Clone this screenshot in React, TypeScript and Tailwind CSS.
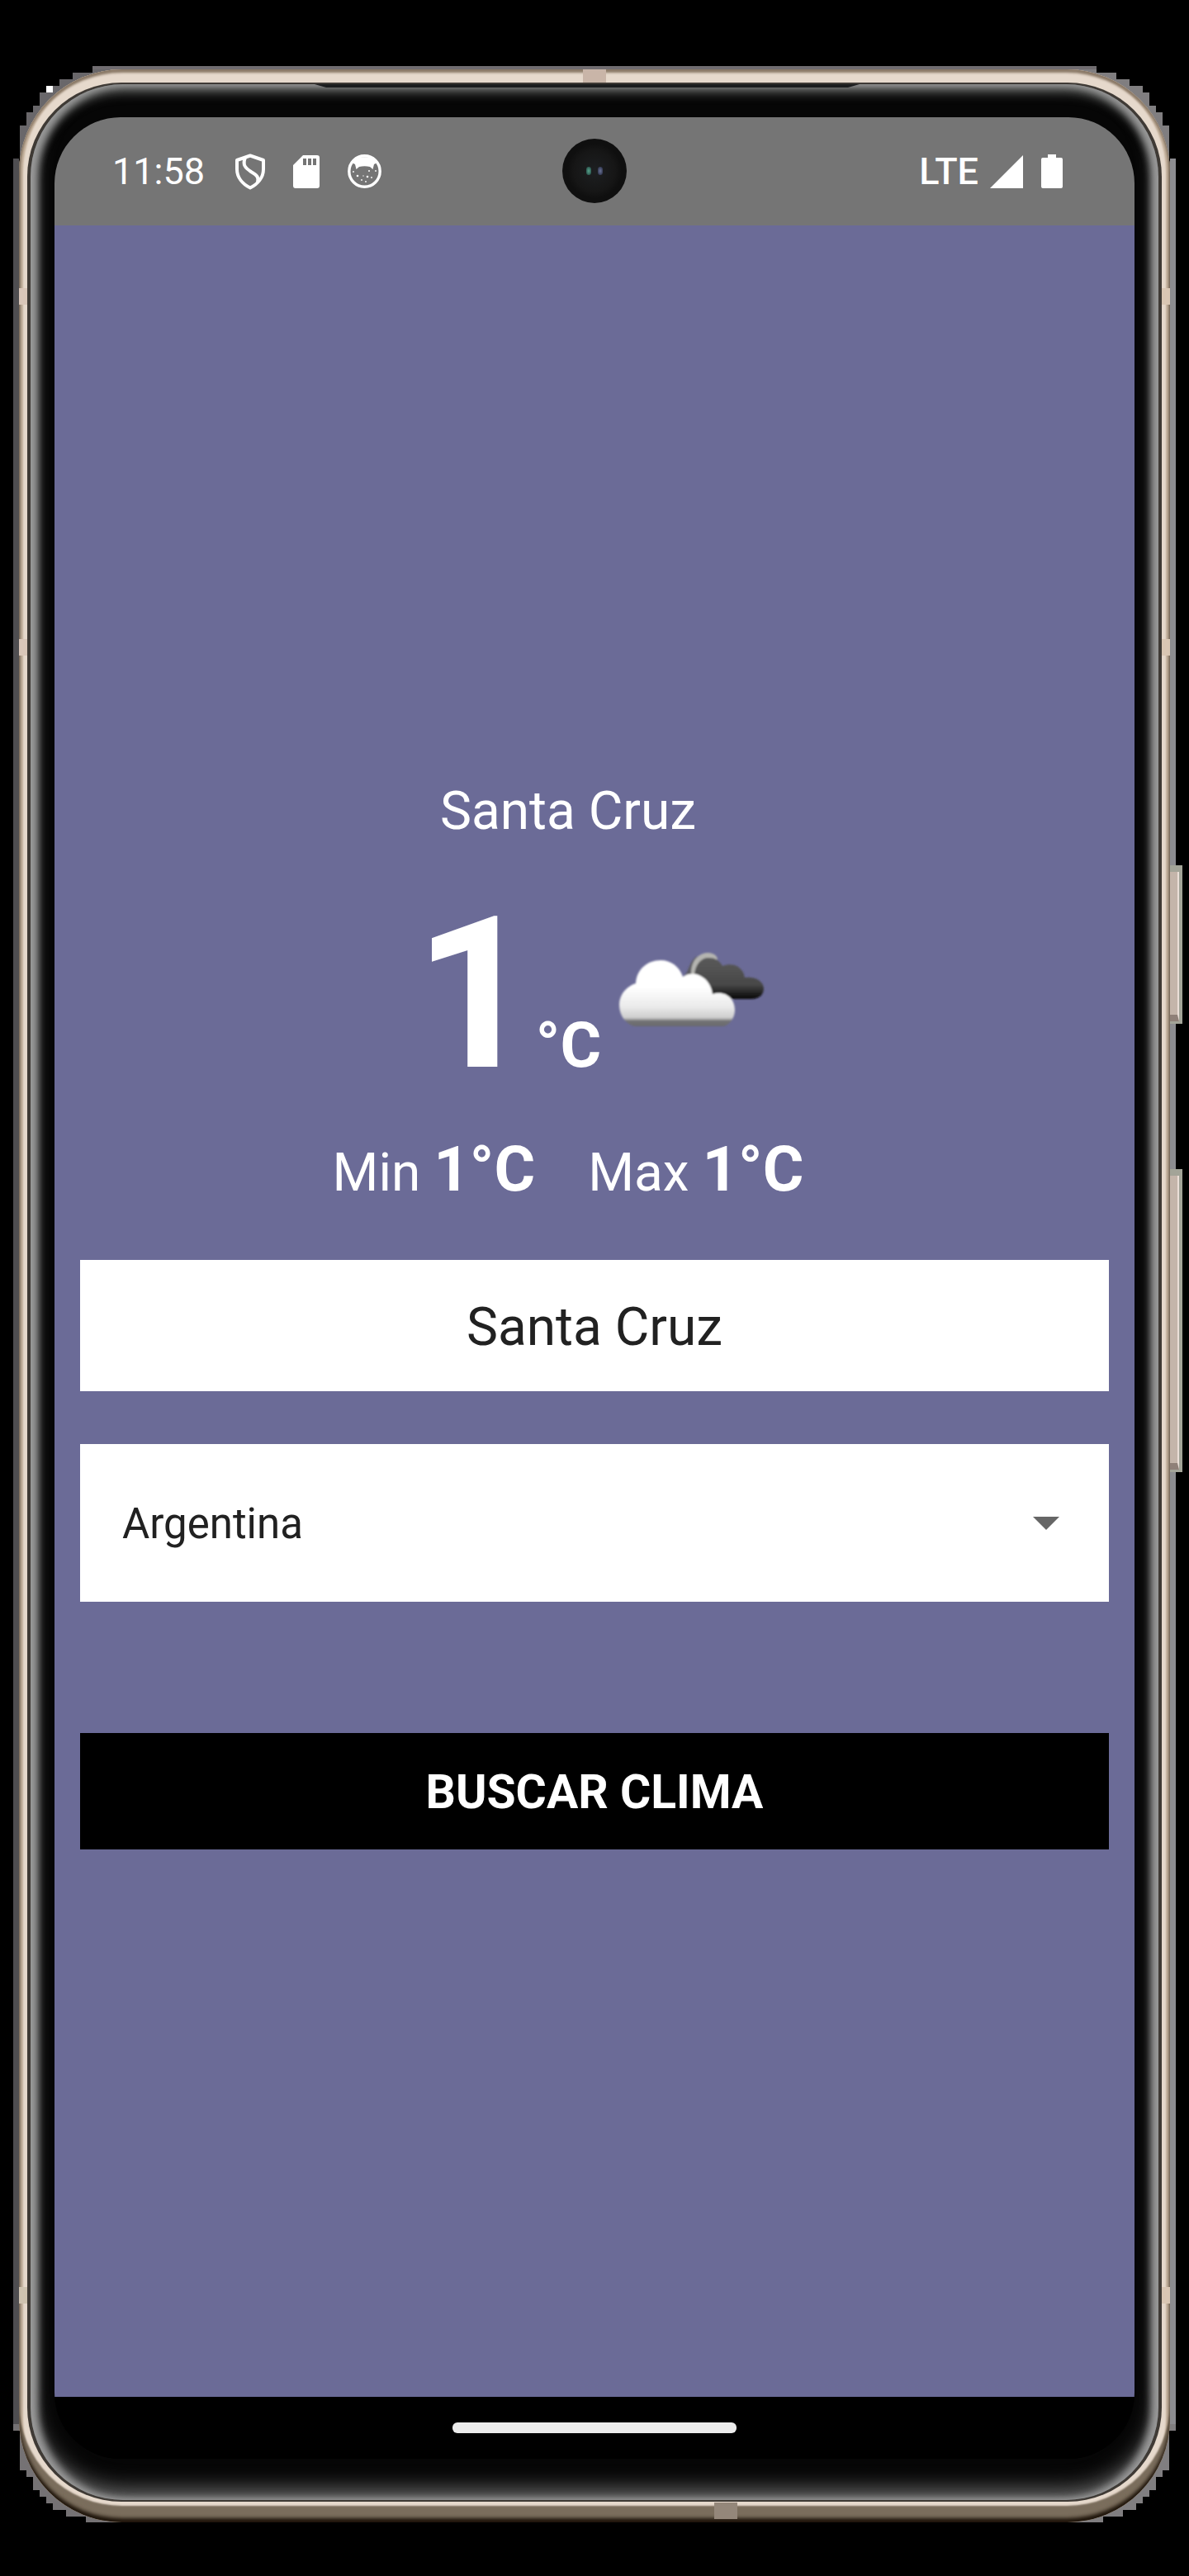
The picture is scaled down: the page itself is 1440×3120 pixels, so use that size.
import React, { useState } from "react";

function ShieldIcon() {
  return (
    <svg viewBox="0 0 36 44" className="h-11 w-9" fill="none" stroke="white" strokeWidth="4" strokeLinejoin="round" aria-hidden="true">
      <path d="M18 2.5 L34 8 V19 C34 29 27 37 18 41.5 C9 37 2 29 2 19 V8 Z" />
      <path d="M12 5 C8 14 13 18 19 22 C26 26 29 29 27 35" />
    </svg>
  );
}

function SdCardIcon() {
  return (
    <svg viewBox="0 0 32 40" className="h-10 w-8" aria-hidden="true">
      <path fill="white" fillRule="evenodd" d="M12 0 H29 Q32 0 32 3 V37 Q32 40 29 40 H3 Q0 40 0 37 V12 Z M12 4 V12 H16 V4 Z M18 4 V12 H22 V4 Z M24 4 V12 H28 V4 Z" />
    </svg>
  );
}

function CatIcon() {
  return (
    <svg viewBox="0 0 41 41" className="h-[41px] w-[41px]" aria-hidden="true">
      <circle cx="20.5" cy="20.5" r="18.7" fill="none" stroke="white" strokeWidth="3.4" />
      <path fill="white" d="M5 10 C10 1 31 1 36 10 L32 12 L30.500 18 L27 15 C23 14 18 14 14 15 L10.500 18 L9 12 Z" />
      <g fill="white">
        <circle cx="12" cy="26" r="1.300" />
        <circle cx="24" cy="27" r="1.300" />
        <circle cx="26" cy="20" r="1" />
        <circle cx="17" cy="31" r="0.900" />
        <circle cx="29" cy="28" r="0.900" />
        <circle cx="22" cy="33" r="0.900" />
        <circle cx="7" cy="21" r="0.900" />
        <circle cx="34" cy="20" r="0.900" />
        <circle cx="19" cy="26" r="0.700" />
      </g>
    </svg>
  );
}

function SignalIcon() {
  return (
    <svg viewBox="0 0 40 40" className="h-10 w-10" aria-hidden="true">
      <path fill="white" d="M40 0 V40 H0 Z" />
    </svg>
  );
}

function BatteryIcon() {
  return (
    <svg viewBox="0 0 26 41" className="h-[41px] w-[26px]" aria-hidden="true">
      <path fill="white" d="M8 0 H18 V4 H24 Q26 4 26 6 V39 Q26 41 24 41 H2 Q0 41 0 39 V6 Q0 4 2 4 H8 Z" />
    </svg>
  );
}

function CloudsIcon() {
  return (
    <svg viewBox="0 0 178 90" className="h-[90px] w-[178px] overflow-visible" role="img" aria-label="Nublado">
      <defs>
        <linearGradient id="dark" x1="0" y1="0" x2="0" y2="1">
          <stop offset="0" stopColor="#5a5a5a" />
          <stop offset="0.650" stopColor="#484848" />
          <stop offset="1" stopColor="#080808" />
        </linearGradient>
        <linearGradient id="light" x1="0" y1="0" x2="0" y2="1">
          <stop offset="0.400" stopColor="#ffffff" />
          <stop offset="0.700" stopColor="#ebebeb" />
          <stop offset="0.870" stopColor="#cdcdcd" />
          <stop offset="0.920" stopColor="#727274" />
          <stop offset="1" stopColor="#6a6a6e" />
        </linearGradient>
        <filter id="soft"><feGaussianBlur stdDeviation="1.200" /></filter>
      </defs>
      <g filter="url(#soft)">
        <path fill="#5c5c60" d="M80 29 C86 26 86 12 96 5 L100 34 Z" />
        <path fill="#b4b4b0" d="M89 28 C88 10 99 1 109 1 C115 1 119 3 121 8 L104 34 Z" />
        <path fill="url(#dark)" d="M93 28 C94 14 102 7 110 7 C118 7 123 10 127 17 C140 12 152 18 154 31 C167 29 177 36 177 44 C177 52 171 57 162 57 H112 Z" />
        <path fill="url(#light)" d="M20 90 C9 87 2 76 2 64 C2 52 10 42 22 38 C23 21 36 10 52 10 C65 10 75 18 79 30 C95 20 113 33 115 51 C130 46 142 56 142 70 C142 79 137 87 129 90 Z" />
      </g>
    </svg>
  );
}

/* Stepped rim behind the rounded corners of the handset. */
function CornerTop({ side }: { side: "left" | "right" }) {
  return (
    <svg viewBox="0 0 136 112" className={side === "left" ? "absolute left-0 top-0 h-28 w-[136px]" : "absolute right-0 top-0 h-28 w-[136px] -scale-x-100"} aria-hidden="true">
      <path fill={side === "left" ? "#69676a" : "#807e80"} d="M136 0 H96 V8 H72 V16 H56 V24 H40 V32 H32 V48 H24 V56 H16 V72 H8 V112 H136 Z" />
      {side === "left" && <rect x="40" y="24" width="8" height="8" fill="white" />}
    </svg>
  );
}

function CornerBottom({ side }: { side: "left" | "right" }) {
  return (
    <svg viewBox="0 0 136 120" className={side === "left" ? "absolute bottom-0 left-0 h-[120px] w-[136px]" : "absolute bottom-0 right-0 h-[120px] w-[136px] -scale-x-100"} aria-hidden="true">
      <path fill={side === "left" ? "#757274" : "#807e80"} d="M136 119 H88 V112 H64 V104 H48 V96 H40 V88 H32 V80 H24 V64 H16 V56 H8 V8 H0 V0 H136 Z" />
    </svg>
  );
}

function SideButton({ className }: { className: string }) {
  return (
    <div className={`absolute -right-2 w-4 bg-[#a3a498] pb-[3px] pr-1 pt-2 ${className}`}>
      <div className="h-full border-b-8 border-r-2 border-b-[#8f8078] border-r-[#eadfd8] bg-[#c4b5aa]" />
    </div>
  );
}

function StatusBar() {
  return (
    <header className="relative flex h-[131px] items-center justify-between bg-[#757575] pl-[70px] pr-[87px] text-[45px] leading-none text-white">
      <div className="flex items-center">
        <time>11:58</time>
        <div className="ml-[37px] flex items-center gap-[34px]">
          <ShieldIcon />
          <SdCardIcon />
          <CatIcon />
        </div>
      </div>
      <div className="absolute left-1/2 top-[26px] flex h-[78px] w-[78px] -translate-x-1/2 items-center justify-center gap-2 rounded-full bg-[radial-gradient(circle,#1d1f21_0%,#161616_45%,#0f0f0f_60%)]">
        <span className="h-2.5 w-1.5 rounded-full bg-[radial-gradient(#57a58c,#1c3a38)]" />
        <span className="h-2.5 w-1.5 rounded-full bg-[radial-gradient(#6a7396,#20243a)]" />
      </div>
      <div className="flex items-center">
        <span className="font-medium">LTE</span>
        <div className="ml-3.5 flex items-center gap-[22px]">
          <SignalIcon />
          <BatteryIcon />
        </div>
      </div>
    </header>
  );
}

function Extreme({ label, value }: { label: string; value: string }) {
  return (
    <span>
      {label} <strong className="text-[76px] font-bold leading-[90px]">{value}</strong>
    </span>
  );
}

function WeatherScreen() {
  const [city, setCity] = useState("Santa Cruz");
  const [country, setCountry] = useState("AR");
  return (
    <main className="flex flex-1 flex-col justify-center bg-[#6b6b97] px-[31px] text-white">
      <section className="flex flex-col items-center text-[64px]">
        <h1 className="pr-16 leading-[92px]">Santa Cruz</h1>
        <div className="mt-[26px] flex items-center">
          <p className="flex items-baseline text-[76px] font-bold leading-none">
            <span className="text-[256px] leading-[300px]">1</span>
            <span>°C</span>
          </p>
          <div className="pb-3.5 pl-5 pr-3">
            <CloudsIcon />
          </div>
        </div>
        <p className="mt-4 flex gap-16 pr-16 leading-[76px]">
          <Extreme label="Min" value="1°C" />
          <Extreme label="Max" value="1°C" />
        </p>
      </section>
      <form className="mt-[65px] flex flex-col" onSubmit={(e) => e.preventDefault()}>
        <input
          aria-label="Ciudad"
          value={city}
          onChange={(e) => setCity(e.target.value)}
          className="h-[159px] w-full bg-white pt-1 text-center text-[64px] text-[#212121] outline-none"
        />
        <div className="relative mt-16">
          <select
            aria-label="País"
            value={country}
            onChange={(e) => setCountry(e.target.value)}
            className="h-[191px] w-full appearance-none bg-white px-[51px] pt-1 text-[51px] text-[#212121] outline-none"
          >
            <option value="AR">Argentina</option>
            <option value="MX">México</option>
            <option value="CO">Colombia</option>
            <option value="ES">España</option>
          </select>
          <svg viewBox="0 0 32 16" className="pointer-events-none absolute right-[60px] top-[88px] h-4 w-8" aria-hidden="true">
            <path d="M0 0 H32 L16 16 Z" fill="#666666" />
          </svg>
        </div>
        <button type="submit" className="mt-[159px] h-[141px] w-full bg-black pt-1 text-[57px] font-bold uppercase">
          Buscar clima
        </button>
      </form>
    </main>
  );
}

export default function App() {
  return (
    <div className="flex min-h-screen flex-col bg-black px-4 pb-16 pt-20 font-[Roboto,sans-serif]">
      <div className="relative flex flex-1 flex-col px-[7px] pb-px pt-1">
        <CornerTop side="left" />
        <CornerTop side="right" />
        <CornerBottom side="left" />
        <CornerBottom side="right" />
        <div className="absolute inset-x-24 top-0 h-1 bg-[#706c70]" />
        <div className="absolute bottom-[120px] left-0 top-28 w-[7px] bg-[#4e4d50]" />
        <div className="absolute bottom-[120px] right-0 top-28 w-[7px] bg-[#8c8c90]" />
        <SideButton className="top-[968px] h-[192px]" />
        <SideButton className="top-[1336px] h-[367px]" />

        <div className="relative flex flex-1 flex-col rounded-[125px] bg-[#e6d9cc] px-2.5 pb-[25px] pt-4 shadow-[inset_0_4px_3px_#8a7967,inset_0_-5px_4px_#1f150b,inset_0_-20px_2px_#7a6d5c,inset_5px_0_2px_#c6b39e,inset_-5px_0_2px_#c6b39e]">
          <span className="absolute left-0 top-[265px] h-5 w-2.5 bg-[#d9c6b8]" />
          <span className="absolute right-0 top-[265px] h-5 w-2.5 bg-[#d9c6b3]" />
          <span className="absolute left-0 top-[690px] h-5 w-2.5 bg-[#d9c6b8]" />
          <span className="absolute right-0 top-[690px] h-5 w-2.5 bg-[#d9c6b3]" />
          <span className="absolute bottom-[265px] left-0 h-5 w-2.5 bg-[#cfc3b0]" />
          <span className="absolute bottom-[265px] right-0 h-5 w-2.5 bg-[#d9c6b3]" />
          <span className="absolute left-1/2 top-0 h-4 w-7 -translate-x-1/2 bg-[#c9b5a8]" />
          <span className="absolute bottom-1 left-[842px] h-5 w-7 bg-[#94877a]" />

          <div className="flex flex-1 flex-col rounded-[114px] bg-[#3f3a35] px-1 pb-0.5 pt-0.5">
            <div className="relative flex flex-1 flex-col rounded-[112px] bg-[#060606] px-[29px] pb-[50px] pt-10 shadow-[inset_9px_0_10px_#999999,inset_-9px_0_10px_#999999,inset_0_9px_14px_#6a6c6a,inset_0_-13px_26px_#6c6c6c]">
              <svg viewBox="0 0 660 4" preserveAspectRatio="none" className="absolute inset-x-[344px] top-0 h-1" aria-hidden="true">
                <path d="M0 0 H660 L646 4 H14 Z" fill="#1b1d1e" />
              </svg>
              <div className="flex flex-1 flex-col overflow-hidden rounded-[80px] bg-black">
                <StatusBar />
                <WeatherScreen />
                <footer className="flex h-[75px] items-center justify-center bg-black">
                  <div className="h-[13px] w-[344px] rounded-md bg-[#ececec]" />
                </footer>
              </div>
            </div>
          </div>
        </div>
      </div>
    </div>
  );
}
